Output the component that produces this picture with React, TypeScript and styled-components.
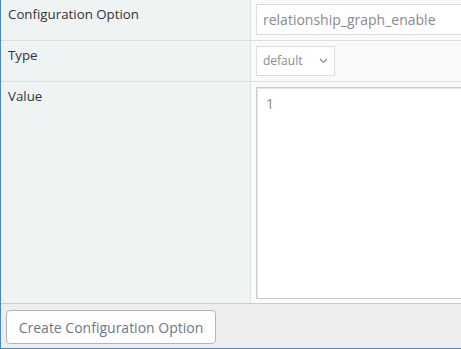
import React from "react";
import styled, { createGlobalStyle } from "styled-components";

const GlobalStyle = createGlobalStyle`
  html, body { margin: 0; padding: 0; background: #ffffff; overflow: hidden; }
  body { font-family: "Open Sans", "Noto Sans", sans-serif; }
  * { box-sizing: border-box; }
`;

const Form = styled.form`
  width: 461px;
  height: 349px;
  border-left: 1px solid #4d86c0;
  border-bottom: 1px solid #4d86c0;
  display: flex;
  flex-direction: column;
  overflow: hidden;
`;

const Table = styled.div`
  flex: 1;
  display: grid;
  grid-template-columns: 250px 1fr;
  grid-template-rows: 41px 41px 1fr;
  border-bottom: 1px solid #cccccc;
  min-width: 0;
`;

const Label = styled.div<{ $last?: boolean }>`
  background: #eef3f3;
  border-right: 1px solid #dfe3e3;
  border-bottom: ${(p) => (p.$last ? "none" : "1px solid #dcdfdf")};
  padding: 4px 7px;
  font-size: 13.3px;
  color: #333333;
  line-height: 20px;
`;

const Cell = styled.div<{ $last?: boolean }>`
  background: #fafafa;
  border-bottom: ${(p) => (p.$last ? "none" : "1px solid #dcdfdf")};
  padding: 4px 0 4px 5px;
  min-width: 0;
  display: flex;
  align-items: flex-start;
  overflow: hidden;
`;

const TextInput = styled.div`
  width: 240px;
  flex-shrink: 0;
  height: 31px;
  border: 1px solid #dddddd;
  background: #ffffff;
  color: #8a8a8a;
  font-size: 14px;
  line-height: 29px;
  padding-left: 6px;
  white-space: nowrap;
`;

const Select = styled.div`
  margin-top: 1px;
  width: 79px;
  height: 30px;
  border: 1px solid #dddddd;
  background: #ffffff;
  color: #8a8a8a;
  font-size: 12px;
  line-height: 28px;
  padding-left: 6px;
  display: flex;
  align-items: center;
  justify-content: space-between;
  padding-right: 6px;
`;

const TextArea = styled.div`
  margin-top: 1px;
  width: 240px;
  flex-shrink: 0;
  height: 212px;
  border: 1px solid #cccccc;
  border-right: none;
  box-shadow: inset 1px 1px 0 #e6e6e6;
  background: #ffffff;
  color: #8a8a8a;
  font-size: 14px;
  padding: 6px 9px;
  line-height: 20px;
`;

const Footer = styled.div`
  height: 44px;
  background: #eeeeee;
  padding: 6px 5px 5px 5px;
  display: flex;
  align-items: flex-start;
`;

const Button = styled.button`
  height: 34px;
  width: 210px;
  border: 1px solid #a8b6c6;
  border-radius: 4px;
  background: #ffffff;
  color: #6a7888;
  font-family: "Open Sans", "Noto Sans", sans-serif;
  font-size: 14px;
  padding: 0;
  cursor: pointer;
`;

const Chevron = () => (
  <svg width="9" height="6" viewBox="0 0 9 6" fill="none">
    <path d="M1 1 L4.5 4.5 L8 1" stroke="#888888" strokeWidth="1.2" />
  </svg>
);

export default function App() {
  return (
    <>
      <GlobalStyle />
      <Form>
        <Table>
          <Label>Configuration Option</Label>
          <Cell>
            <TextInput>relationship_graph_enable</TextInput>
          </Cell>
          <Label>Type</Label>
          <Cell>
            <Select>
              <span>default</span>
              <Chevron />
            </Select>
          </Cell>
          <Label $last>Value</Label>
          <Cell $last>
            <TextArea>1</TextArea>
          </Cell>
        </Table>
        <Footer>
          <Button type="button">Create Configuration Option</Button>
        </Footer>
      </Form>
    </>
  );
}
